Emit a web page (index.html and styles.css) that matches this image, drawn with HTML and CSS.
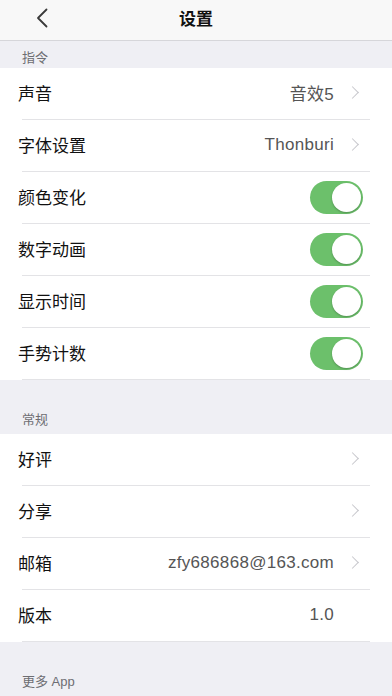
FILE: index.html
```html
<!DOCTYPE html>
<html lang="zh">
<head>
<meta charset="utf-8">
<link rel="stylesheet" href="styles.css">
</head>
<body>
<div class="screen">
  <header class="nav">
    <svg class="back" width="12" height="20" viewBox="0 0 12 20"><path d="M10.5 1.5 L2 10 L10.5 18.5" fill="none" stroke="#3a3a3a" stroke-width="1.8" stroke-linecap="round" stroke-linejoin="round"/></svg>
    <div class="title">设置</div>
  </header>

  <div class="sec-head first">指令</div>
  <div class="group">
    <div class="row"><span class="label">声音</span><span class="value">音效5</span><span class="chev"></span></div>
    <div class="row"><span class="label">字体设置</span><span class="value">Thonburi</span><span class="chev"></span></div>
    <div class="row"><span class="label">颜色变化</span><span class="toggle"></span></div>
    <div class="row"><span class="label">数字动画</span><span class="toggle"></span></div>
    <div class="row"><span class="label">显示时间</span><span class="toggle"></span></div>
    <div class="row"><span class="label">手势计数</span><span class="toggle"></span></div>
  </div>

  <div class="sec-head">常规</div>
  <div class="group">
    <div class="row"><span class="label">好评</span><span class="value"></span><span class="chev"></span></div>
    <div class="row"><span class="label">分享</span><span class="value"></span><span class="chev"></span></div>
    <div class="row"><span class="label">邮箱</span><span class="value">zfy686868@163.com</span><span class="chev"></span></div>
    <div class="row"><span class="label">版本</span><span class="value">1.0</span><span class="chev blank"></span></div>
  </div>

  <div class="sec-head">更多 App</div>
</div>
</body>
</html>
```

FILE: styles.css
```css
* { box-sizing: border-box; }
html, body { margin: 0; padding: 0; }
body {
  font-family: "Noto Sans CJK SC", "Liberation Sans", sans-serif;
  background: #efeff4;
  width: 392px;
  height: 696px;
  overflow: hidden;
}
.screen { display: flex; flex-direction: column; }
.nav {
  height: 41px;
  background: #f8f8f8;
  border-bottom: 1px solid #d6d6da;
  display: flex;
  align-items: center;
  justify-content: center;
  position: relative;
}
.back { position: absolute; left: 36px; top: 8px; }
.title { font-size: 17px; font-weight: 700; color: #111; margin-top: -5px; }
.sec-head {
  height: 54px;
  display: flex;
  align-items: flex-end;
  padding: 0 0 6px 22px;
  font-size: 13px;
  color: #6d6d72;
  font-family: "Liberation Sans", "Noto Sans CJK SC", sans-serif;
}
.sec-head.first { height: 27px; padding-bottom: 2px; }
.group { background: #fff; }
.row {
  height: 52px;
  display: flex;
  align-items: center;
  padding: 0 29px 3px 18px;
  position: relative;
}
.row::after {
  content: "";
  position: absolute;
  left: 22px;
  right: 22px;
  bottom: 0;
  height: 1px;
  background: #e3e3e6;
}
.label { font-size: 17px; color: #111; flex: 1; }
.value {
  font-size: 17px;
  letter-spacing: 0.3px;
  color: #555;
  font-family: "Liberation Sans", "Noto Sans CJK SC", sans-serif;
  margin-right: 14px;
}
.chev {
  width: 9px;
  height: 9px;
  border-top: 1.2px solid #c7c7cc;
  border-right: 1.2px solid #c7c7cc;
  transform: rotate(45deg);
  margin-right: 6px;
}
.chev.blank { border: none; }
.toggle {
  width: 53px;
  height: 33px;
  border-radius: 17px;
  background: #6cc06b;
  position: relative;
  margin-top: 2px;
}
.toggle::after {
  content: "";
  position: absolute;
  right: 2px;
  top: 2px;
  width: 29px;
  height: 29px;
  border-radius: 50%;
  background: #fff;
  box-shadow: 0 1px 2px rgba(0,0,0,0.25);
}
```
